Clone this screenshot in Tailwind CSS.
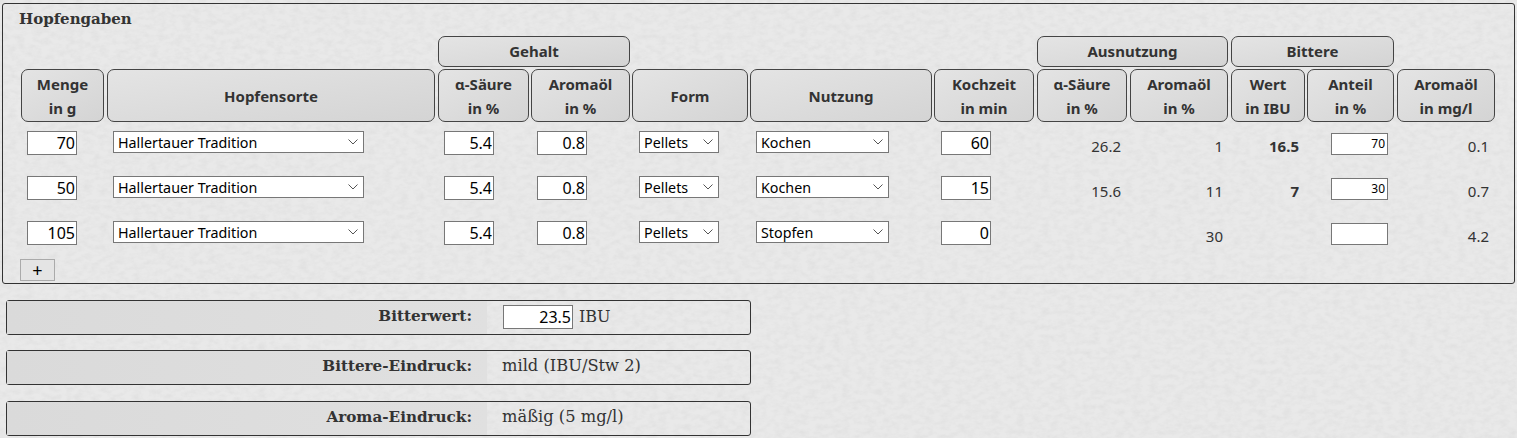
<!DOCTYPE html>
<html lang="de">
<head>
  <meta charset="UTF-8" />
  <title>Hopfengaben</title>
  <script src="https://cdn.jsdelivr.net/npm/@tailwindcss/browser@4"></script>
</head>
<body class="relative h-[438px] overflow-hidden bg-[#e9e9e9] font-['Noto_Sans',sans-serif] text-[15px] text-[#333]">

  <!-- paper texture -->
  <svg class="absolute inset-0 w-full h-full pointer-events-none" aria-hidden="true">
    <filter id="paper">
      <feTurbulence type="fractalNoise" baseFrequency="0.12 0.2" numOctaves="4" seed="4" />
      <feColorMatrix values="0 0 0 0 0  0 0 0 0 0  0 0 0 0 0  0.3 0 0 0 -0.1" />
    </filter>
    <rect width="100%" height="100%" filter="url(#paper)" opacity="0.2" />
  </svg>

  <div class="relative px-[2px] pt-[3px]">
    <!-- Hopfengaben -->
    <section class="h-[281px] w-[1513px] rounded-[3px] border border-[#333] pl-[16px] pt-[6px]">
      <h2 class="h-[26px] font-['DejaVu_Serif',serif] text-[15px] leading-[19px] font-bold text-[#333]">Hopfengaben</h2>

      <div class="grid grid-cols-[84px_329px_91px_99px_116px_182px_101px_91px_99px_74px_88px_98px] gap-x-[2px] pl-[2px] font-bold text-center">
        <!-- group headers -->
        <div class="col-start-3 col-span-2 mb-[2px] flex h-[31px] items-center justify-center rounded-[7px] border border-[#444] bg-gradient-to-br from-[#e4e4e4] to-[#d4d4d4]">Gehalt</div>
        <div class="col-start-8 col-span-2 mb-[2px] mr-[1px] flex h-[31px] items-center justify-center rounded-[7px] border border-[#444] bg-gradient-to-br from-[#e4e4e4] to-[#d4d4d4]">Ausnutzung</div>
        <div class="col-start-10 col-span-2 mb-[2px] mr-[1px] flex h-[31px] items-center justify-center rounded-[7px] border border-[#444] bg-gradient-to-br from-[#e4e4e4] to-[#d4d4d4]">Bittere</div>

        <!-- column headers -->
        <div class="col-start-1 mr-[1px] flex h-[53px] items-center justify-center rounded-[7px] border border-[#444] bg-gradient-to-br from-[#e4e4e4] to-[#d4d4d4] leading-[24px]">Menge<br />in g</div>
        <div class="mr-[1px] flex h-[53px] items-center justify-center rounded-[7px] border border-[#444] bg-gradient-to-br from-[#e4e4e4] to-[#d4d4d4] pt-[1px]">Hopfensorte</div>
        <div class="flex h-[53px] items-center justify-center rounded-[7px] border border-[#444] bg-gradient-to-br from-[#e4e4e4] to-[#d4d4d4] leading-[24px]">α-Säure<br />in %</div>
        <div class="flex h-[53px] items-center justify-center rounded-[7px] border border-[#444] bg-gradient-to-br from-[#e4e4e4] to-[#d4d4d4] leading-[24px]">Aromaöl<br />in %</div>
        <div class="flex h-[53px] items-center justify-center rounded-[7px] border border-[#444] bg-gradient-to-br from-[#e4e4e4] to-[#d4d4d4] pt-[1px]">Form</div>
        <div class="flex h-[53px] items-center justify-center rounded-[7px] border border-[#444] bg-gradient-to-br from-[#e4e4e4] to-[#d4d4d4] pt-[1px]">Nutzung</div>
        <div class="mr-[1px] flex h-[53px] items-center justify-center rounded-[7px] border border-[#444] bg-gradient-to-br from-[#e4e4e4] to-[#d4d4d4] leading-[24px]">Kochzeit<br />in min</div>
        <div class="mr-[1px] flex h-[53px] items-center justify-center rounded-[7px] border border-[#444] bg-gradient-to-br from-[#e4e4e4] to-[#d4d4d4] leading-[24px]">α-Säure<br />in %</div>
        <div class="mr-[1px] flex h-[53px] items-center justify-center rounded-[7px] border border-[#444] bg-gradient-to-br from-[#e4e4e4] to-[#d4d4d4] leading-[24px]">Aromaöl<br />in %</div>
        <div class="flex h-[53px] items-center justify-center rounded-[7px] border border-[#444] bg-gradient-to-br from-[#e4e4e4] to-[#d4d4d4] leading-[24px]">Wert<br />in IBU</div>
        <div class="mr-[1px] flex h-[53px] items-center justify-center rounded-[7px] border border-[#444] bg-gradient-to-br from-[#e4e4e4] to-[#d4d4d4] leading-[24px]">Anteil<br />in %</div>
        <div class="flex h-[53px] items-center justify-center rounded-[7px] border border-[#444] bg-gradient-to-br from-[#e4e4e4] to-[#d4d4d4] leading-[24px]">Aromaöl<br />in mg/l</div>
      </div>

      <!-- rows are filled from data below -->
      <div id="rows" class="pt-[9px]"></div>

      <button class="mt-[-7px] ml-[1px] flex h-[22px] w-[35px] items-center justify-center border border-[#aaa] bg-[#e4e4e4] text-[18px] leading-none text-black">+</button>
    </section>

    <!-- Summary -->
    <div class="ml-[4px] mt-[16px] flex w-[745px] flex-col gap-[15px]">
      <div class="flex h-[35px] rounded-[3px] border border-[#333] font-['DejaVu_Serif',serif] text-[16px]">
        <div class="flex w-[480px] items-center justify-end bg-gradient-to-r from-[#dadada] to-[#e0e0e0] pb-[2px] pr-[15px] text-[15.2px] font-bold">Bitterwert:</div>
        <div class="flex items-center pb-[1px] pl-[16px]">
          <input value="23.5" class="h-[24px] w-[70px] border border-[#777] bg-white pr-[1px] text-right font-['Noto_Sans',sans-serif] text-[16px] text-black" />
          <span class="ml-[6px] pb-[1px]">IBU</span>
        </div>
      </div>
      <div class="flex h-[35px] rounded-[3px] border border-[#333] font-['DejaVu_Serif',serif] text-[16.3px]">
        <div class="flex w-[480px] items-center justify-end bg-gradient-to-r from-[#dadada] to-[#e0e0e0] pb-[2px] pr-[15px] text-[15.2px] font-bold">Bittere-Eindruck:</div>
        <div class="flex items-center pb-[2px] pl-[15px]">mild (IBU/Stw 2)</div>
      </div>
      <div class="mt-[1px] flex h-[35px] rounded-[3px] border border-[#333] font-['DejaVu_Serif',serif] text-[16.3px]">
        <div class="flex w-[480px] items-center justify-end bg-gradient-to-r from-[#dadada] to-[#e0e0e0] pb-[2px] pr-[15px] text-[15.2px] font-bold">Aroma-Eindruck:</div>
        <div class="flex items-center pb-[2px] pl-[15px]">mäßig (5 mg/l)</div>
      </div>
    </div>
  </div>

  <script>
    const hops = [
      { menge: 70, form: "Kochen", zeit: 60, aus: "26.2", ausOel: "1", ibu: "16.5", anteil: "70", mg: "0.1" },
      { menge: 50, form: "Kochen", zeit: 15, aus: "15.6", ausOel: "11", ibu: "7", anteil: "30", mg: "0.7" },
      { menge: 105, form: "Stopfen", zeit: 0, aus: "", ausOel: "30", ibu: "", anteil: "", mg: "4.2" },
    ];
    const chevron = '<svg class="absolute right-[5px] top-[7px]" width="10" height="6" viewBox="0 0 10 6" fill="none" stroke="#555"><path d="M0.5 0.5 5 5 9.5 0.5"/></svg>';
    const num = (v) => `<input value="${v}" class="h-[24px] w-[50px] border border-[#777] bg-white pr-[1px] text-right text-[16px] text-black" />`;
    const sel = (v, w) => `<div class="relative flex h-[22px] ${w} items-center border border-[#777] bg-white pl-[4px] pt-[2px] text-[14.3px] text-black">${v}${chevron}</div>`;

    document.getElementById("rows").innerHTML = hops.map((h) => `
      <div class="grid h-[45px] grid-cols-[84px_329px_91px_99px_116px_182px_101px_91px_99px_74px_88px_98px] gap-x-[2px] pl-[2px]">
        <div class="pl-[6px]">${num(h.menge)}</div>
        <div class="pl-[6px]">${sel("Hallertauer Tradition", "w-[251px]")}</div>
        <div class="pl-[6px]">${num("5.4")}</div>
        <div class="pl-[6px]">${num("0.8")}</div>
        <div class="pl-[7px]">${sel("Pellets", "w-[80px]")}</div>
        <div class="pl-[6px]">${sel(h.form, "w-[133px]")}</div>
        <div class="pl-[7px]">${num(h.zeit)}</div>
        <div class="pt-[4px] pr-[7px] text-right">${h.aus}</div>
        <div class="pt-[4px] pr-[6px] text-right">${h.ausOel}</div>
        <div class="pt-[4px] pr-[6px] text-right font-bold">${h.ibu}</div>
        <div class="pl-[24px]"><input value="${h.anteil}" class="h-[22px] w-[57px] border border-[#777] bg-white pr-[2px] text-right text-[12px] text-black" /></div>
        <div class="pt-[4px] pr-[6px] text-right">${h.mg}</div>
      </div>`).join("");
  </script>
</body>
</html>
